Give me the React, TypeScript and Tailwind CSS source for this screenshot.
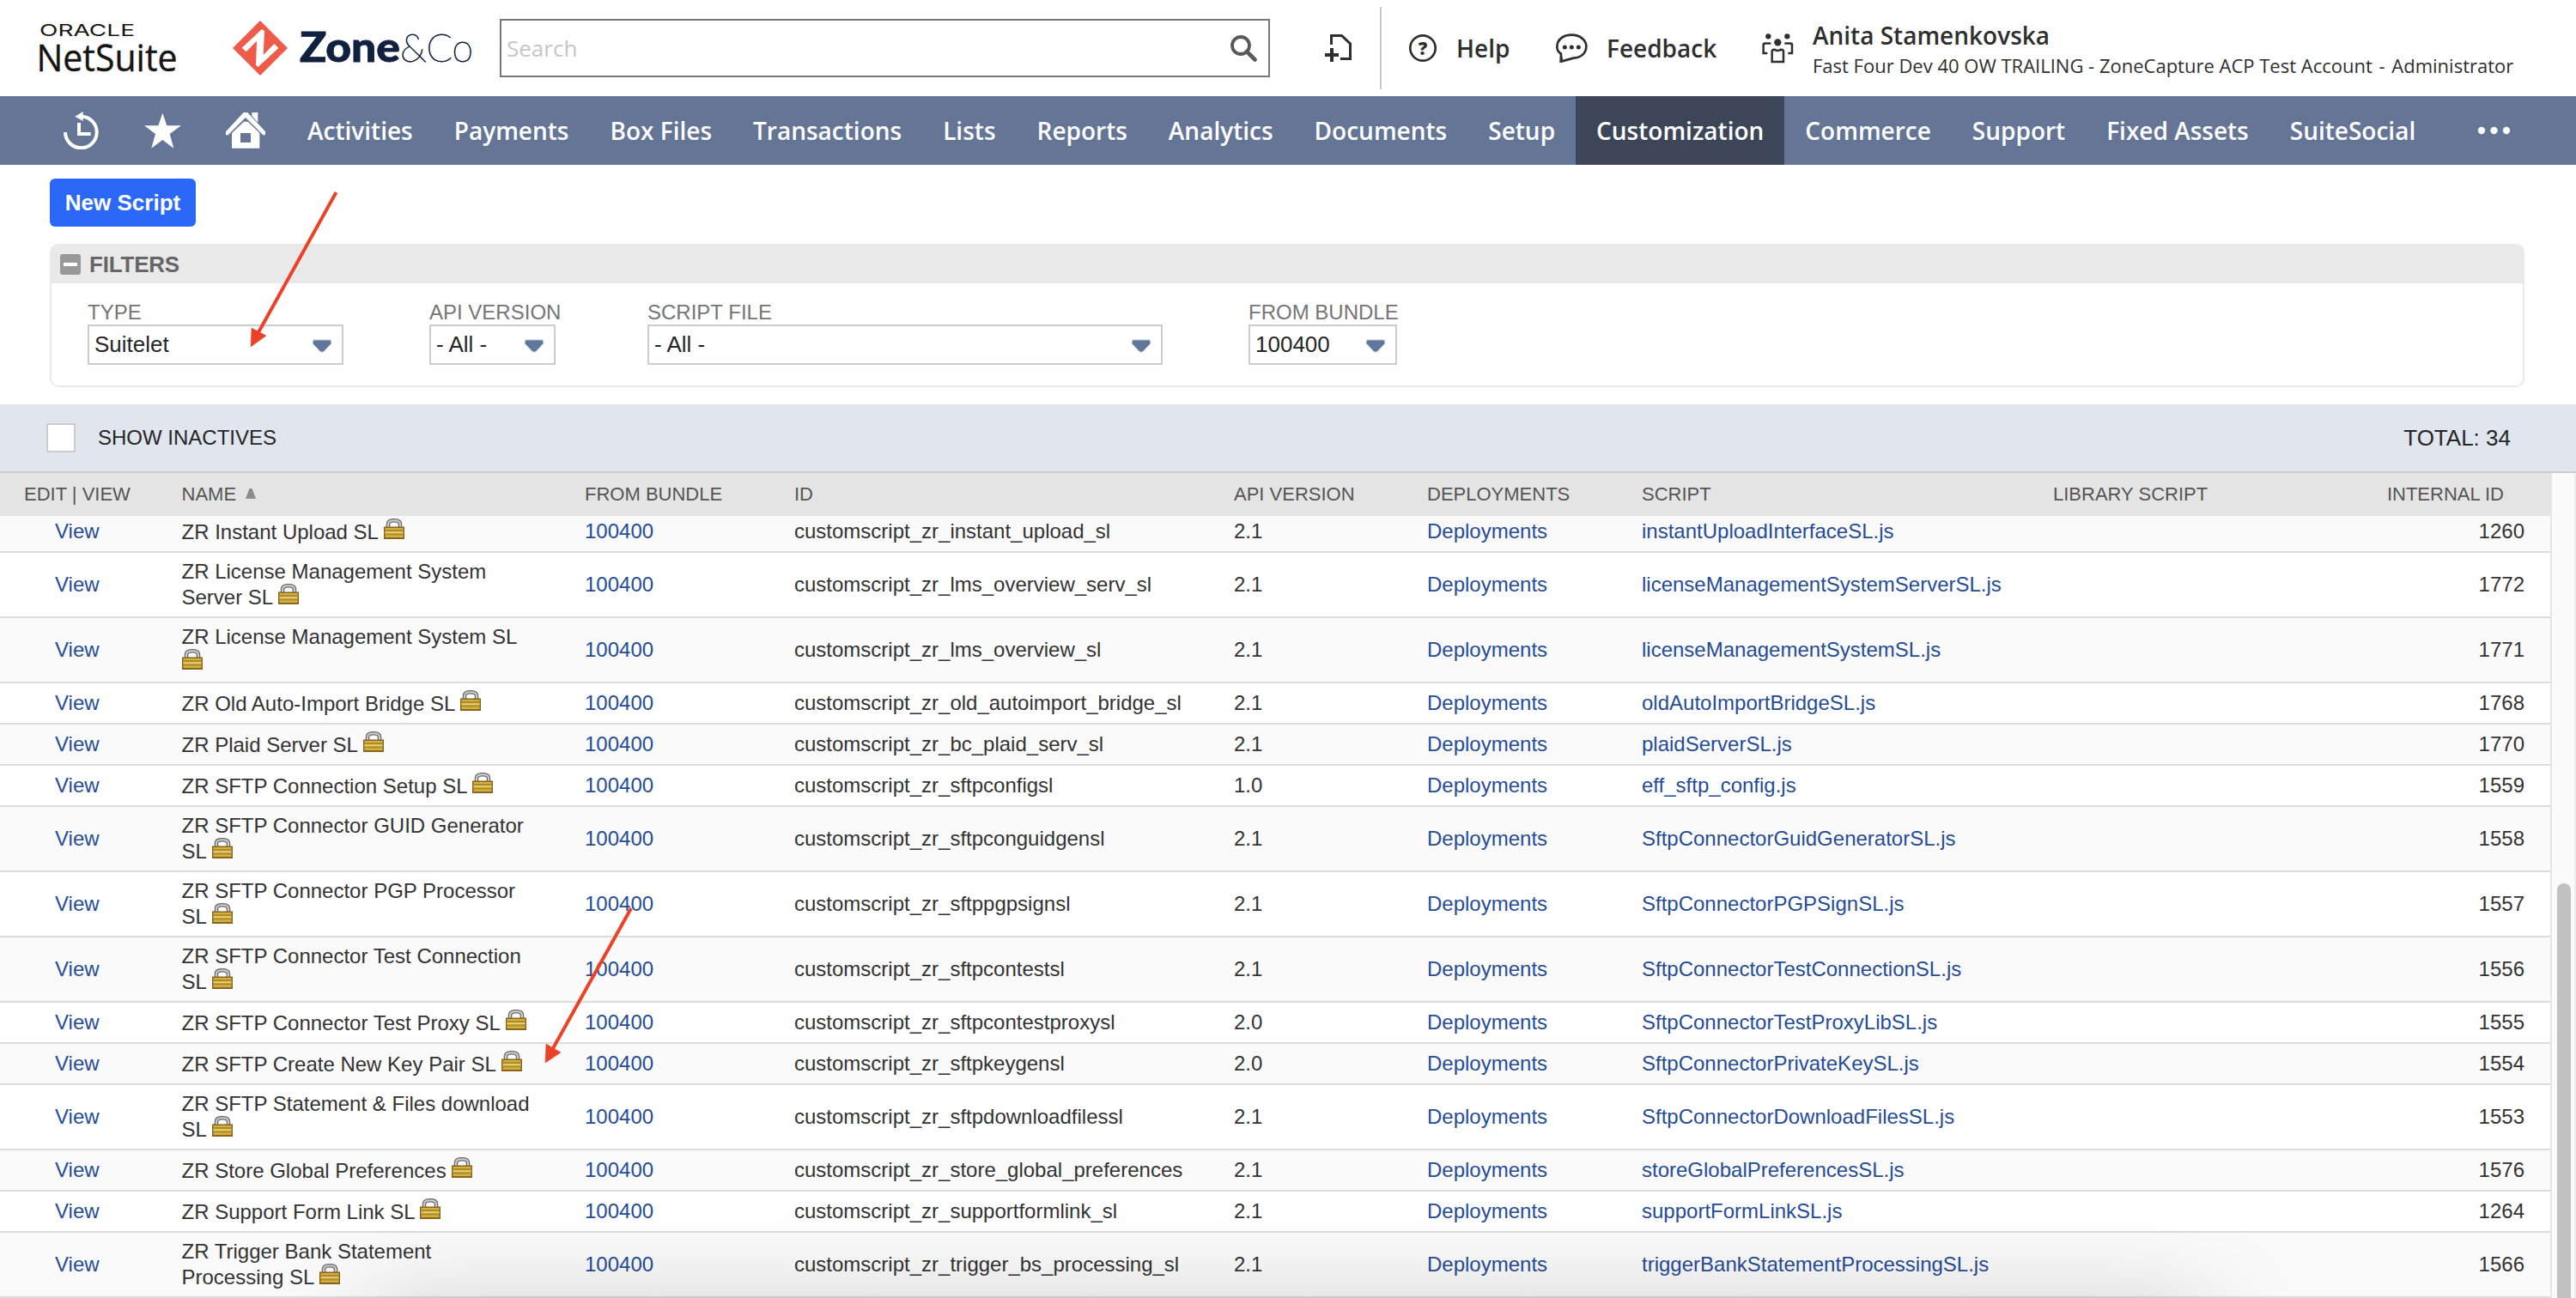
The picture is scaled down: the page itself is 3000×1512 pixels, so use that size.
import React from 'react';

interface ScriptRow {
  name: string;
  id: string;
  api: string;
  script: string;
  internalId: string;
}

const scripts: ScriptRow[] = [
  { name: 'ZR Instant Upload SL', id: 'customscript_zr_instant_upload_sl', api: '2.1', script: 'instantUploadInterfaceSL.js', internalId: '1260' },
  { name: 'ZR License Management System Server SL', id: 'customscript_zr_lms_overview_serv_sl', api: '2.1', script: 'licenseManagementSystemServerSL.js', internalId: '1772' },
  { name: 'ZR License Management System SL', id: 'customscript_zr_lms_overview_sl', api: '2.1', script: 'licenseManagementSystemSL.js', internalId: '1771' },
  { name: 'ZR Old Auto-Import Bridge SL', id: 'customscript_zr_old_autoimport_bridge_sl', api: '2.1', script: 'oldAutoImportBridgeSL.js', internalId: '1768' },
  { name: 'ZR Plaid Server SL', id: 'customscript_zr_bc_plaid_serv_sl', api: '2.1', script: 'plaidServerSL.js', internalId: '1770' },
  { name: 'ZR SFTP Connection Setup SL', id: 'customscript_zr_sftpconfigsl', api: '1.0', script: 'eff_sftp_config.js', internalId: '1559' },
  { name: 'ZR SFTP Connector GUID Generator SL', id: 'customscript_zr_sftpconguidgensl', api: '2.1', script: 'SftpConnectorGuidGeneratorSL.js', internalId: '1558' },
  { name: 'ZR SFTP Connector PGP Processor SL', id: 'customscript_zr_sftppgpsignsl', api: '2.1', script: 'SftpConnectorPGPSignSL.js', internalId: '1557' },
  { name: 'ZR SFTP Connector Test Connection SL', id: 'customscript_zr_sftpcontestsl', api: '2.1', script: 'SftpConnectorTestConnectionSL.js', internalId: '1556' },
  { name: 'ZR SFTP Connector Test Proxy SL', id: 'customscript_zr_sftpcontestproxysl', api: '2.0', script: 'SftpConnectorTestProxyLibSL.js', internalId: '1555' },
  { name: 'ZR SFTP Create New Key Pair SL', id: 'customscript_zr_sftpkeygensl', api: '2.0', script: 'SftpConnectorPrivateKeySL.js', internalId: '1554' },
  { name: 'ZR SFTP Statement & Files download SL', id: 'customscript_zr_sftpdownloadfilessl', api: '2.1', script: 'SftpConnectorDownloadFilesSL.js', internalId: '1553' },
  { name: 'ZR Store Global Preferences', id: 'customscript_zr_store_global_preferences', api: '2.1', script: 'storeGlobalPreferencesSL.js', internalId: '1576' },
  { name: 'ZR Support Form Link SL', id: 'customscript_zr_supportformlink_sl', api: '2.1', script: 'supportFormLinkSL.js', internalId: '1264' },
  { name: 'ZR Trigger Bank Statement Processing SL', id: 'customscript_zr_trigger_bs_processing_sl', api: '2.1', script: 'triggerBankStatementProcessingSL.js', internalId: '1566' },
];

// names too long for one line get the taller row
const tallRows = ['1772', '1771', '1558', '1557', '1556', '1553', '1566'];

const navItems = [
  'Activities', 'Payments', 'Box Files', 'Transactions', 'Lists', 'Reports', 'Analytics', 'Documents',
  'Setup', 'Customization', 'Commerce', 'Support', 'Fixed Assets', 'SuiteSocial',
];

const columns = 'grid grid-cols-[211.5px_469.5px_244px_512px_225px_250px_479px_1fr]';

const NetSuiteLogo: React.FC = () => (
  <svg className="ml-[46px] h-[64px] w-[162px] shrink-0 overflow-visible" viewBox="46 24 162 64" fill="#161513">
    <text x="46" y="42" fontFamily="Inter" fontSize="19" fontWeight="400" textLength="111" lengthAdjust="spacingAndGlyphs">ORACLE</text>
    <text x="42.5" y="83" fontFamily="Open Sans" fontSize="43.5" fontWeight="400" stroke="#161513" strokeWidth="0.4" textLength="164" lengthAdjust="spacingAndGlyphs">NetSuite</text>
  </svg>
);

const ZoneLogo: React.FC = () => (
  <svg className="ml-[63px] h-[64px] w-[282px] shrink-0 overflow-visible" viewBox="271 24 282 64">
    <g transform="translate(30 10) scale(0.33333)">
      <path d="M819 42 915 138 819 234 723 138Z" fill="#ee5b49" />
      <path d="M755 137 825 72 834 78 830 162 868 123 883 138 812 204 804 197 807 113 770 151Z" fill="#fff" />
    </g>
    <text x="349" y="72" fontFamily="Lato" fontSize="47" fontWeight="900" fill="#10203f" stroke="#10203f" strokeWidth="0.8" textLength="117" lengthAdjust="spacingAndGlyphs">Zone</text>
    <text x="466" y="72" fontFamily="Lato" fontSize="46" fontWeight="100" fill="#10203f" stroke="#10203f" strokeWidth="0.9" textLength="85" lengthAdjust="spacingAndGlyphs">&amp;Co</text>
  </svg>
);

const Lock: React.FC = () => (
  <svg className="-mt-1 inline-block h-6 w-6 align-baseline" viewBox="0 0 24 24">
    <path d="M5 11V6.500C5 3.500 7.500 2.200 12 2.200S19 3.500 19 6.500V11" fill="none" stroke="#6e6e6e" strokeWidth="4.600" />
    <path d="M5 11V6.500C5 3.500 7.500 2.200 12 2.200S19 3.500 19 6.500V11" fill="none" stroke="#cdcdcd" strokeWidth="2" />
    <rect x="0" y="9.500" width="24" height="14.500" fill="#8a621c" />
    <rect x="1.500" y="11" width="21" height="11" fill="#d2b340" />
    <rect x="1.500" y="13" width="21" height="2" fill="#b08a2e" />
    <rect x="1.500" y="17.500" width="21" height="2" fill="#b08a2e" />
    <rect x="1.500" y="15.500" width="21" height="1.500" fill="#e6d470" />
  </svg>
);

const Select: React.FC<{ label: string; value: string; className: string }> = ({ label, value, className }) => (
  <div className={className}>
    <div className="h-7 text-2xl leading-7 whitespace-nowrap text-[#757575]">{label}</div>
    <div className="flex h-[47px] items-center justify-between border-2 border-[#ccc] bg-white pr-[11px] pl-[6px] text-[26px] text-[#262626]">
      <span>{value}</span>
      <svg className="mt-[3px] h-4 w-6" viewBox="0 0 24 16">
        <path d="M2 1H22L23 5 14.500 14Q12 16.500 9.500 14L1 5Z" fill="#607799" stroke="#b9c6d8" strokeWidth="1" />
      </svg>
    </div>
  </div>
);

const TopBar: React.FC = () => (
  <header className="flex h-28 items-center bg-white font-['Open_Sans',sans-serif] text-[28px] font-semibold text-[#2f2f2f]">
    <NetSuiteLogo />
    <ZoneLogo />
    <div className="ml-[29px] flex h-[68px] w-[897px] shrink-0 items-center justify-between border-2 border-[#777] pr-[13px] pl-[6px]">
      <span className="text-[26px] font-normal text-[#c6c6c6]">Search</span>
      <svg className="h-[31px] w-[31px]" viewBox="0 0 31 31" fill="none" stroke="#595959">
        <circle cx="12" cy="12" r="10" strokeWidth="3.800" />
        <path d="M19 19 28.500 28.500" strokeWidth="4.600" strokeLinecap="round" />
      </svg>
    </div>
    <svg className="ml-[64px] h-8 w-8 shrink-0" viewBox="0 0 32 32" fill="none" stroke="#2f2f2f">
      <path d="M7.500 12V1.500H19.500L29.500 11V28.500H18" strokeWidth="3" />
      <path d="M8 16V32M0 24H16" strokeWidth="4" />
    </svg>
    <div className="ml-[32px] h-24 w-0.5 shrink-0 bg-[#c8c8c8]" />
    <div className="ml-[31px] flex w-[172px] shrink-0 items-center">
      <svg className="h-[34px] w-[34px]" viewBox="0 0 34 34">
        <circle cx="17" cy="17" r="14.700" fill="none" stroke="#2f2f2f" strokeWidth="2.700" />
        <text x="17" y="24.500" textAnchor="middle" fontFamily="Open Sans" fontSize="21" fontWeight="800" fill="#2f2f2f">?</text>
      </svg>
      <span className="ml-[22px]">Help</span>
    </div>
    <div className="flex w-[240px] shrink-0 items-center">
      <svg className="h-[34px] w-[37px]" viewBox="638 89 111 102">
        <path d="M659 187 655 159C646 153 642 145 642 136 642 110 664 94 693 94S744 112 744 134C744 157 726 173 705 174 690 176 673 183 655 187L656 158" fill="none" stroke="#2f2f2f" strokeWidth="8" />
        <circle cx="669" cy="137" r="7.500" fill="#2f2f2f" />
        <circle cx="693" cy="137" r="7.500" fill="#2f2f2f" />
        <circle cx="717" cy="137" r="7.500" fill="#2f2f2f" />
      </svg>
      <span className="ml-[22px]">Feedback</span>
    </div>
    <svg className="h-[35px] w-[37px] shrink-0" viewBox="1358 89 111 105">
      <g fill="#2f2f2f">
        <circle cx="1380" cy="99" r="9.500" />
        <circle cx="1446" cy="99" r="9.500" />
        <circle cx="1413" cy="120" r="12.500" />
      </g>
      <g fill="none" stroke="#2f2f2f" strokeWidth="7.500">
        <path d="M1389 123C1378 126 1368 120 1363 126V158H1377" />
        <path d="M1437 123C1448 126 1458 120 1463 126V158H1449" />
        <path d="M1393 188V152C1393 146 1398 145 1401 145 1409 150 1417 150 1425 145 1429 145 1433 147 1433 152V188Z" />
      </g>
    </svg>
    <div className="ml-[22px] pt-1 whitespace-nowrap">
      <div className="h-[35px] leading-[35px]">Anita Stamenkovska</div>
      <div className="h-[34px] text-[22px] leading-[34px] font-normal">
        Fast Four Dev 40 OW TRAILING - ZoneCapture ACP Test Account <span className="mx-[2px]">-</span> Administrator
      </div>
    </div>
  </header>
);

const NavBar: React.FC = () => (
  <nav className="flex h-20 items-center bg-[#657596] font-['Open_Sans',sans-serif] text-[28px] font-semibold text-white">
    {/* recent, favourites, home */}
    <svg className="ml-[73px] h-11 w-[42px] shrink-0" viewBox="129 360 126 132" fill="#fff">
      <path d="M138 432A55 55 0 1 0 198 377" fill="none" stroke="#fff" strokeWidth="12" />
      <path d="M172 377 200 360V393Z" />
      <path d="M180 399H192V432H227V444H180Z" />
    </svg>
    <svg className="ml-[53px] h-11 w-[43px] shrink-0" viewBox="416 360 129 132" fill="#fff">
      <path d="M480 365 495 409H545L505 438 519 488 480 459 441 488 455 438 416 409H465Z" />
    </svg>
    <svg className="ml-[52px] h-11 w-[46px] shrink-0" viewBox="699 360 138 132" fill="#fff">
      <path d="M699 430 761 363H775L837 430V442H829L768 381 707 442H699Z" />
      <path d="M790 363H811V398L790 375Z" />
      <path fillRule="evenodd" d="M720 435 762 395H776L817 435V488H720ZM750 435V468H786V435Z" />
    </svg>
    <div className="ml-[25px] flex h-full">
      {navItems.map((item) => (
        <a key={item} className={`flex h-full items-center px-6 whitespace-nowrap ${item === 'Customization' ? 'bg-[#3c4658]' : ''}`}>
          {item}
        </a>
      ))}
    </div>
    <svg className="mr-[75px] ml-auto h-3 w-10 shrink-0" viewBox="0 0 40 12" fill="#fff">
      <circle cx="5" cy="6" r="4.200" />
      <circle cx="19.500" cy="6" r="4.200" />
      <circle cx="34" cy="6" r="4.200" />
    </svg>
  </nav>
);

const Filters: React.FC = () => (
  <section className="mr-[60px] ml-[58px] h-[167px] overflow-hidden rounded-[10px] border-2 border-[#e9e9e9]">
    <div className="flex h-11 items-center bg-[#e9e9e9] pl-[10px]">
      <div className="flex h-6 w-6 items-center justify-center rounded-[3px] bg-[#999]">
        <div className="h-1 w-4 bg-white" />
      </div>
      <h2 className="ml-[10px] text-[26px] font-bold tracking-[-0.2px] text-[#666]">FILTERS</h2>
    </div>
    <div className="flex pt-5 pl-[42px]">
      <Select label="TYPE" value="Suitelet" className="w-[298px]" />
      <Select label="API VERSION" value="- All -" className="ml-[100px] w-[147px]" />
      <Select label="SCRIPT FILE" value="- All -" className="ml-[107px] w-[600px]" />
      <Select label="FROM BUNDLE" value="100400" className="ml-[100px] w-[173px]" />
    </div>
  </section>
);

const ScriptTable: React.FC = () => (
  <div className="w-[2972px] border-r-2 border-[#e5e5e5]">
    <div className={`${columns} h-[50px] items-center bg-[#e4e4e4] pb-0.5 text-[22px] text-[#555]`}>
      <div className="pl-7">EDIT | VIEW</div>
      <div className="flex items-center">
        NAME
        <svg className="ml-[11px] h-3 w-3" viewBox="0 0 12 12">
          <path d="M4.500 0H7.500L12 12H0Z" fill="#8c8c8c" />
        </svg>
      </div>
      <div>FROM BUNDLE</div>
      <div>ID</div>
      <div>API VERSION</div>
      <div>DEPLOYMENTS</div>
      <div>SCRIPT</div>
      <div className="flex justify-between pr-[54px]">
        <span>LIBRARY SCRIPT</span>
        <span>INTERNAL ID</span>
      </div>
    </div>
    {/* the list is scrolled, so the first row sits partly under the header */}
    <div className="flex h-[911px] flex-col justify-end overflow-hidden">
      {scripts.map((row, i) => (
        <div
          key={row.internalId}
          className={`${columns} shrink-0 items-center border-b-2 border-[#dcdcdc] text-2xl text-[#333] ${
            tallRows.includes(row.internalId) ? 'h-[76px]' : 'h-12'
          } ${i % 2 === 0 ? 'bg-[#fafafa]' : 'bg-white'}`}
        >
          <a className="pl-[64px] text-[#264c96]">View</a>
          <div className={`w-[412px] leading-[30px] ${tallRows.includes(row.internalId) ? '' : 'pt-0.5'}`}>
            {row.name} <Lock />
          </div>
          <a className="text-[#264c96]">100400</a>
          <div>{row.id}</div>
          <div>{row.api}</div>
          <a className="text-[#264c96]">Deployments</a>
          <a className="text-[#264c96]">{row.script}</a>
          <div className="pr-[30px] text-right">{row.internalId}</div>
        </div>
      ))}
    </div>
  </div>
);

const App: React.FC = () => (
  <div className="relative h-[1512px] w-[3000px] overflow-hidden bg-white font-['Liberation_Sans',Arial,sans-serif]">
    <TopBar />
    <NavBar />
    <div className="pt-4 pb-5">
      <button className="ml-[58px] block h-14 w-[170px] rounded-md bg-[#2b68f8] text-[26px] font-bold whitespace-nowrap text-white">New Script</button>
    </div>
    <Filters />
    <div className="mt-5 flex h-20 items-center border-b-2 border-[#ccc] bg-[#e0e5ee] pr-[76px] pl-[54px] text-[#262626]">
      <div className="h-[34px] w-[34px] border-2 border-[#ccc] bg-white" />
      <span className="ml-[26px] text-2xl">SHOW INACTIVES</span>
      <span className="ml-auto text-[26px]">TOTAL: 34</span>
    </div>
    <div className="flex">
      <ScriptTable />
      <div className="h-[961px] w-7 border-r-2 border-[#ececec] bg-[#fafafa] pt-[478px] pl-[6px]">
        <div className="h-full w-4 rounded-t-full bg-[#c1c1c1]" />
      </div>
    </div>

    {/* shadow rising from the bottom edge */}
    <div className="pointer-events-none absolute top-[1536px] right-[430px] left-[430px] h-20 shadow-[0_0_120px_rgba(0,0,0,0.25)]" />

    {/* pointer arrows */}
    <svg className="pointer-events-none absolute top-0 left-0 h-[1512px] w-[3000px]" viewBox="0 0 3000 1512" fill="#ec4127" stroke="#ec4127">
      <path d="M391.500 224 300 389" strokeWidth="4" />
      <path d="M293 382 310 391 292 404Z" strokeWidth="0.500" />
      <path d="M735 1058 643 1223" strokeWidth="4" />
      <path d="M636 1216 653 1226 635 1238Z" strokeWidth="0.500" />
    </svg>
  </div>
);

export default App;
